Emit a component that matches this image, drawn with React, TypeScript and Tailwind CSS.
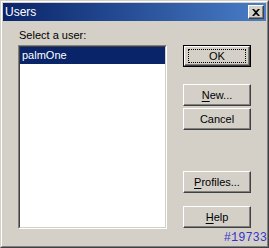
import React from 'react';

const font = { fontFamily: '"Liberation Sans", Arial, sans-serif' };

// Raised Win2000-style push button
function Btn({
  label,
  hot,
  isDefault,
  className = '',
}: {
  label: string;
  hot?: number;
  isDefault?: boolean;
  className?: string;
}) {
  const text =
    hot === undefined ? (
      label
    ) : (
      <>
        {label.slice(0, hot)}
        <span className="underline underline-offset-[2px]">{label[hot]}</span>
        {label.slice(hot + 1)}
      </>
    );

  const face = (
    <div className="flex h-full w-full items-center justify-center border border-t-white border-l-white border-r-[#404040] border-b-[#404040] bg-[#d4d0c8] shadow-[inset_-1px_-1px_#808080,inset_1px_1px_#d4d0c8] text-[11px] text-black">
      {isDefault ? (
        <div className="flex h-[14px] w-[58px] items-center justify-center border border-dotted border-black">
          {text}
        </div>
      ) : (
        text
      )}
    </div>
  );

  return (
    <div className={`h-[22px] w-[68px] ${className}`}>
      {isDefault ? <div className="h-full w-full border border-black">{face}</div> : face}
    </div>
  );
}

export default function App() {
  return (
    <div className="bg-white">
      <div
        className="relative flex h-[248px] w-[269px] flex-col border border-t-[#d4d0c8] border-l-[#d4d0c8] border-r-[#404040] border-b-[#404040] bg-[#d4d0c8]"
        style={font}
      >
        <div className="flex h-full flex-col border border-t-white border-l-white border-r-[#808080] border-b-[#808080] p-px">
          {/* Title bar */}
          <div className="flex h-[18px] items-center justify-between bg-gradient-to-r from-[#0a246a] to-[#4a7ec8] pl-[2px] pr-[2px]">
            <span className="text-[12px] leading-none text-white">Users</span>
            <div className="flex h-[14px] w-[16px] items-center justify-center border border-t-white border-l-white border-r-[#404040] border-b-[#404040] bg-[#d4d0c8] shadow-[inset_-1px_-1px_#808080]">
              <svg width="8" height="7" viewBox="0 0 8 7">
                <path d="M0 0h2l2 2 2-2h2L5 3.5 8 7H6L4 5 2 7H0l3-3.5z" fill="#000" />
              </svg>
            </div>
          </div>

          {/* Body */}
          <div className="flex flex-1 pl-[15px] pr-[15px] pt-[8px]">
            <div className="flex w-[149px] flex-col">
              <div className="h-[16px] pl-[1px] text-[11px] leading-[13px] text-black">Select a user:</div>
              <div className="h-[184px] border border-t-[#808080] border-l-[#808080] border-r-white border-b-white">
                <div className="h-full border border-t-[#404040] border-l-[#404040] border-r-[#d4d0c8] border-b-[#d4d0c8] bg-white">
                  <div className="flex h-[17px] items-center bg-[#0a246a] pl-[2px] text-[11px] text-white">
                    palmOne
                  </div>
                </div>
              </div>
            </div>

            <div className="ml-[16px] flex flex-col pt-[16px]">
              <Btn label="OK" isDefault />
              <Btn label="New..." hot={0} className="mt-[17px]" />
              <Btn label="Cancel" className="mt-[2px]" />
              <Btn label="Profiles..." hot={0} className="mt-[41px]" />
              <Btn label="Help" hot={0} className="mt-[13px]" />
            </div>
          </div>
        </div>

        <span
          className="absolute bottom-[3px] right-[1px] text-[12px] leading-none text-[#3434c8]"
          style={{ fontFamily: '"Liberation Mono", "Courier New", monospace' }}
        >
          #19733
        </span>
      </div>
    </div>
  );
}
